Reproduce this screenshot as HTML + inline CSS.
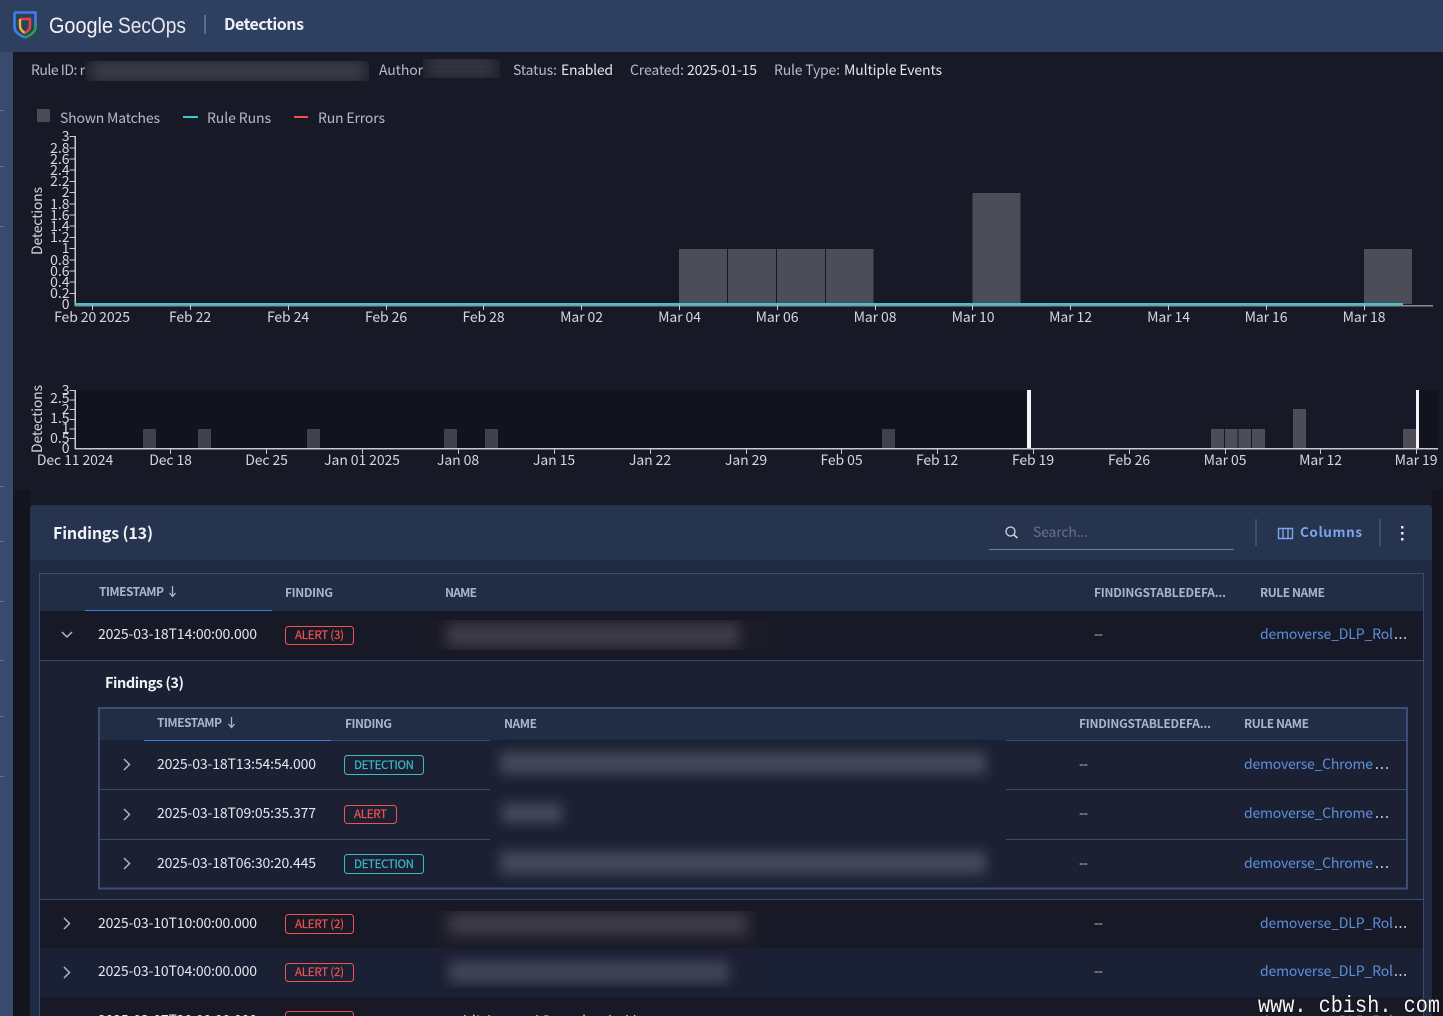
<!DOCTYPE html>
<html><head><meta charset="utf-8"><title>Detections</title>
<style>
html,body{margin:0;padding:0;background:#181926;overflow:hidden}
svg{display:block;font-family:"Noto Sans CJK JP","Liberation Sans",sans-serif}
.m{font-size:14px;fill:#b4bbcb}.w{font-size:14px;fill:#e4e6ec}
.t{font-size:14px;fill:#d6d7dc;letter-spacing:-.1px}.yl{font-size:14px;fill:#d6d7dc;text-anchor:end}
.h{font-size:12px;font-weight:700;fill:#a9b5cf}.c{font-size:14px;fill:#e6e8ee}
.d{font-size:14px;fill:#b9bcc6}.l{font-size:14px;fill:#5d8fdc}.e{font-size:14px;fill:#d9dbe2}
.r{font-size:11.5px;fill:#ef5350;stroke:#ef5350;stroke-width:.2}.b{font-size:11.5px;fill:#3db8c8;stroke:#3db8c8;stroke-width:.2}
.ch{fill:none;stroke:#a9b5cf;stroke-width:1.5}
</style></head><body>
<svg width="1443" height="1016" viewBox="0 0 1443 1016" xmlns="http://www.w3.org/2000/svg">
<defs>
<filter id="f" x="-10%" y="-100%" width="120%" height="300%"><feGaussianBlur stdDeviation="6"/></filter>
<filter id="g" x="-10%" y="-100%" width="120%" height="300%"><feGaussianBlur stdDeviation="6"/></filter>
<clipPath id="c1"><rect x="85" y="61" width="284" height="20"/></clipPath>
<clipPath id="c2"><rect x="423" y="59" width="77" height="19"/></clipPath>
<clipPath id="c3"><rect x="430" y="620" width="340" height="30"/></clipPath>
<clipPath id="c4"><rect x="435" y="911" width="323" height="77"/></clipPath>
</defs>
<rect width="1443" height="1016" fill="#181926"/>
<rect x="13" y="490" width="17" height="526" fill="#13141e"/>
<rect x="1432" y="490" width="11" height="526" fill="#13141e"/>
<!-- sidebar -->
<rect x="0" y="52" width="13" height="964" fill="#3a4a6c"/>
<g fill="#5f70a0"><rect y="110" width="4" height="1"/><rect y="166" width="4" height="1"/><rect y="226" width="4" height="1"/><rect y="486" width="4" height="1"/><rect y="541" width="4" height="1"/><rect y="601" width="4" height="1"/><rect y="660" width="4" height="1"/><rect y="716" width="4" height="1"/><rect y="776" width="4" height="1"/></g>
<!-- header -->
<rect width="1443" height="52" fill="#2f3f5f"/>
<path d="M14.5 12.5H35.5V27" fill="none" stroke="#3f7fe8" stroke-width="2.6"/>
<path d="M14.5 12.5V27C14.5 32 20 35.5 25 37.5" fill="none" stroke="#3f7fe8" stroke-width="2.6"/>
<path d="M35.5 24V27C35.5 32 30 35.5 25 37.5" fill="none" stroke="#27a04f" stroke-width="2.6"/>
<path d="M20 19H30V26C30 28 29 30 27.5 31" fill="none" stroke="#e5443a" stroke-width="2.4"/>
<path d="M20 19V26C20 29 22.5 31.5 25 33" fill="none" stroke="#f4b82e" stroke-width="2.4"/>
<path d="M30 26C30 29 27.5 31.5 25 33" fill="none" stroke="#e5443a" stroke-width="2.4"/>
<text x="49" y="33" font-size="22" fill="#f2f4f8" textLength="64" lengthAdjust="spacingAndGlyphs" style="font-family:'Liberation Sans',sans-serif">Google</text>
<text x="118" y="33" font-size="22" fill="#e3e6ee" textLength="68" lengthAdjust="spacingAndGlyphs" style="font-family:'Liberation Sans',sans-serif">SecOps</text>
<rect x="204" y="15" width="2" height="19" fill="#5a6b99"/>
<text x="224" y="30" font-size="16" font-weight="700" fill="#eef0f5" textLength="80">Detections</text>
<!-- meta -->
<text class="m" x="31" y="75" textLength="54">Rule ID: r</text>
<rect x="85" y="61" width="284" height="20" fill="#1f1f2b"/>
<g clip-path="url(#c1)"><g filter="url(#g)"><rect x="92" y="60" width="272" height="22" fill="#3b3b49"/></g></g>
<text class="m" x="379" y="75" textLength="44">Author</text>
<rect x="423" y="59" width="77" height="19" fill="#1f1f2b"/>
<g clip-path="url(#c2)"><g filter="url(#g)"><rect x="428" y="56" width="66" height="22" fill="#35353f"/></g></g>
<text class="m" x="513" y="75" textLength="44">Status:</text><text class="w" x="561" y="75" textLength="52">Enabled</text>
<text class="m" x="630" y="75" textLength="54">Created:</text><text class="w" x="687" y="75" textLength="70">2025-01-15</text>
<text class="m" x="774" y="75" textLength="66">Rule Type:</text><text class="w" x="844" y="75" textLength="98">Multiple Events</text>
<!-- legend -->
<rect x="37" y="109" width="13" height="13" fill="#4b4b57"/>
<text class="m" x="60" y="123" textLength="100">Shown Matches</text>
<rect x="183" y="116" width="15" height="2" fill="#3fc4d0"/><text class="m" x="207" y="123" textLength="64">Rule Runs</text>
<rect x="294" y="116" width="14" height="2" fill="#ef5350"/><text class="m" x="318" y="123" textLength="67">Run Errors</text>
<!-- chart 1 -->
<g fill="#4d4d59"><rect x="679" y="249" width="48" height="55"/><rect x="728" y="249" width="48" height="55"/><rect x="777" y="249" width="48" height="55"/><rect x="826" y="249" width="47.500" height="55"/><rect x="972.500" y="193" width="48" height="111"/><rect x="1364" y="249" width="48" height="55"/></g>
<rect x="74.500" y="136" width="1.500" height="170" fill="#c9c9cf"/>
<rect x="75" y="305" width="1358" height="1.500" fill="#8d8f98"/>
<rect x="75" y="303" width="1328" height="2" fill="#3fc4d0"/>
<g stroke="#c9c9cf" stroke-width="1"><path d="M69.500 136.500H75M69.500 148H75M69.500 159H75M69.500 170H75M69.500 181.500H75M69.500 192.500H75M69.500 204H75M69.500 215H75M69.500 226H75M69.500 237.500H75M69.500 248.500H75M69.500 260H75M69.500 271H75M69.500 282H75M69.500 293.500H75"/>
<path d="M92.500 305V310M190.500 305V310M288.500 305V310M386.500 305V310M483.500 305V310M581.500 305V310M679.500 305V310M777.500 305V310M875.500 305V310M972.500 305V310M1070.500 305V310M1168.500 305V310M1266.500 305V310M1364.500 305V310"/></g>
<g><text class="yl" x="69.500" y="141">3</text><text class="yl" x="69.500" y="153">2.8</text><text class="yl" x="69.500" y="164">2.6</text><text class="yl" x="69.500" y="175">2.4</text><text class="yl" x="69.500" y="186">2.2</text><text class="yl" x="69.500" y="197">2</text><text class="yl" x="69.500" y="209">1.8</text><text class="yl" x="69.500" y="220">1.6</text><text class="yl" x="69.500" y="231">1.4</text><text class="yl" x="69.500" y="242">1.2</text><text class="yl" x="69.500" y="253">1</text><text class="yl" x="69.500" y="265">0.8</text><text class="yl" x="69.500" y="276">0.6</text><text class="yl" x="69.500" y="287">0.4</text><text class="yl" x="69.500" y="298">0.2</text><text class="yl" x="69.500" y="309">0</text></g>
<text class="t" transform="translate(42,255) rotate(-90)" textLength="68">Detections</text>
<g text-anchor="middle"><text class="t" x="92" y="322">Feb 20 2025</text><text class="t" x="190" y="322">Feb 22</text><text class="t" x="288" y="322">Feb 24</text><text class="t" x="386" y="322">Feb 26</text><text class="t" x="483.500" y="322">Feb 28</text><text class="t" x="581.500" y="322">Mar 02</text><text class="t" x="679.500" y="322">Mar 04</text><text class="t" x="777" y="322">Mar 06</text><text class="t" x="875" y="322">Mar 08</text><text class="t" x="973" y="322">Mar 10</text><text class="t" x="1070.500" y="322">Mar 12</text><text class="t" x="1168.500" y="322">Mar 14</text><text class="t" x="1266" y="322">Mar 16</text><text class="t" x="1364" y="322">Mar 18</text></g>
<!-- chart 2 -->
<rect x="75" y="390" width="953" height="58" fill="#12131c"/><rect x="1418" y="390" width="20" height="58" fill="#12131c"/>
<g fill="#41414c"><rect x="143" y="429" width="13" height="19"/><rect x="198" y="429" width="13" height="19"/><rect x="307" y="429" width="13" height="19"/><rect x="444" y="429" width="13" height="19"/><rect x="485" y="429" width="13" height="19"/><rect x="882" y="429" width="13" height="19"/></g>
<g fill="#4d4d59"><rect x="1211" y="429" width="13" height="19"/><rect x="1225" y="429" width="12.500" height="19"/><rect x="1238.500" y="429" width="12.500" height="19"/><rect x="1252" y="429" width="13" height="19"/><rect x="1293" y="409" width="13" height="39"/><rect x="1403" y="429" width="13" height="19"/></g>
<rect x="74.500" y="390" width="1.500" height="59" fill="#c9c9cf"/>
<rect x="75" y="448" width="1363" height="1.500" fill="#c9c9cf"/>
<rect x="1027" y="390" width="4" height="58" fill="#f4f4f6"/><rect x="1416" y="390" width="3" height="58" fill="#f4f4f6"/>
<g stroke="#c9c9cf" stroke-width="1"><path d="M69.500 390.500H75M69.500 400H75M69.500 409.500H75M69.500 419.500H75M69.500 429H75M69.500 438.500H75"/>
<path d="M170.500 449V454M266.500 449V454M362.500 449V454M458.500 449V454M554.500 449V454M650.500 449V454M746.500 449V454M841.500 449V454M937.500 449V454M1033.500 449V454M1129.500 449V454M1225.500 449V454M1320.500 449V454M1416.500 449V454"/></g>
<text class="yl" x="69.500" y="395">3</text><text class="yl" x="69.500" y="403">2.5</text><text class="yl" x="69.500" y="414">2</text><text class="yl" x="69.500" y="423">1.5</text><text class="yl" x="69.500" y="433">1</text><text class="yl" x="69.500" y="443">0.5</text><text class="yl" x="69.500" y="453">0</text>
<text class="t" transform="translate(42,453) rotate(-90)" textLength="68">Detections</text>
<g text-anchor="middle"><text class="t" x="75" y="465">Dec 11 2024</text><text class="t" x="170.500" y="465">Dec 18</text><text class="t" x="266.500" y="465">Dec 25</text><text class="t" x="362" y="465">Jan 01 2025</text><text class="t" x="458" y="465">Jan 08</text><text class="t" x="554" y="465">Jan 15</text><text class="t" x="650" y="465">Jan 22</text><text class="t" x="746" y="465">Jan 29</text><text class="t" x="841.500" y="465">Feb 05</text><text class="t" x="937" y="465">Feb 12</text><text class="t" x="1033" y="465">Feb 19</text><text class="t" x="1129" y="465">Feb 26</text><text class="t" x="1225" y="465">Mar 05</text><text class="t" x="1320.500" y="465">Mar 12</text><text class="t" x="1416" y="465">Mar 19</text></g>
<!-- panel -->
<path d="M30 1016V509a4 4 0 0 1 4-4H1428a4 4 0 0 1 4 4V1016Z" fill="#1f2a43"/>
<path d="M30 560V509a4 4 0 0 1 4-4H1428a4 4 0 0 1 4 4V560Z" fill="#26344f"/>
<text x="53" y="539" font-size="16" font-weight="700" fill="#f0f2f6" textLength="100">Findings (13)</text>
<circle cx="1010.500" cy="531.500" r="4.500" fill="none" stroke="#d5d8e0" stroke-width="1.300"/><path d="M1014 535L1017.500 538" stroke="#d5d8e0" stroke-width="1.600"/>
<text x="1033" y="537" font-size="14" fill="#667089" textLength="55">Search...</text>
<rect x="989" y="549" width="245" height="1" fill="#6a7aa8"/>
<rect x="1255" y="519" width="2" height="27" fill="#3c4c74"/><rect x="1379" y="519" width="2" height="27" fill="#3c4c74"/>
<path d="M1278.500 528.500H1292.500V538.500H1278.500ZM1283 528.500V538.500M1288 528.500V538.500" fill="none" stroke="#7ba5ea" stroke-width="1.400"/>
<text x="1300" y="537" font-size="13.500" font-weight="700" fill="#7ba5ea" textLength="62">Columns</text>
<g fill="#e8eaf0"><rect x="1401" y="526" width="2.500" height="2.500"/><rect x="1401" y="532" width="2.500" height="2.500"/><rect x="1401" y="538" width="2.500" height="2.500"/></g>
<!-- outer table -->
<rect x="39.500" y="573.500" width="1384" height="450" fill="#181926" stroke="#3a4a70"/>
<rect x="40" y="574" width="1383" height="37" fill="#212c45"/>
<rect x="85" y="610" width="187" height="1" fill="#3a7fe0"/>
<text class="h" x="99" y="596" textLength="65">TIMESTAMP</text>
<path d="M172.500 586V596M169.500 593L172.500 596.500L175.500 593" fill="none" stroke="#a9b5cf" stroke-width="1.300"/>
<text class="h" x="285" y="597" textLength="48">FINDING</text><text class="h" x="445" y="597" textLength="32">NAME</text>
<text class="h" x="1094" y="597" textLength="132">FINDINGSTABLEDEFA...</text><text class="h" x="1260" y="597" textLength="65">RULE NAME</text>
<!-- row 1 -->
<path class="ch" d="M62 632L67 637L72 632"/>
<text class="c" x="98" y="639" textLength="159">2025-03-18T14:00:00.000</text>
<rect x="285.500" y="626.500" width="68" height="18" rx="3" fill="none" stroke="#ef5350"/>
<text class="r" x="295" y="639" textLength="49">ALERT (3)</text>
<rect x="430" y="620" width="340" height="30" fill="#1b1b27"/>
<g clip-path="url(#c3)"><g filter="url(#f)"><rect x="447" y="623" width="292" height="24" fill="#3c3a46"/></g></g>
<text class="d" x="1094" y="639" textLength="9">--</text>
<text class="l" x="1260" y="639" textLength="133">demoverse_DLP_Rol</text><text class="e" x="1394" y="639" textLength="13">...</text>
<!-- expanded -->
<rect x="40" y="660" width="1383" height="240" fill="#1b2133"/>
<rect x="40" y="660" width="1383" height="1" fill="#3a4a70"/><rect x="40" y="899" width="1383" height="1" fill="#3a4a70"/>
<text x="105" y="688" font-size="14.500" font-weight="700" fill="#f0f2f6" textLength="79">Findings (3)</text>
<rect x="99" y="708" width="1308" height="180.500" fill="#1b2133" stroke="#3d4d76" stroke-width="2"/>
<rect x="100" y="709" width="1306" height="31" fill="#212c45"/>
<rect x="144" y="740" width="187" height="1" fill="#3a7fe0"/>
<rect x="331" y="740" width="159" height="1" fill="#3a4a70"/><rect x="1006" y="740" width="400" height="1" fill="#3a4a70"/>
<text class="h" x="157" y="727" textLength="65">TIMESTAMP</text>
<path d="M231.500 717V727M228.500 724L231.500 727.500L234.500 724" fill="none" stroke="#a9b5cf" stroke-width="1.300"/>
<text class="h" x="345" y="728" textLength="47">FINDING</text><text class="h" x="504" y="728" textLength="33">NAME</text>
<text class="h" x="1079" y="728" textLength="132">FINDINGSTABLEDEFA...</text><text class="h" x="1244" y="728" textLength="65">RULE NAME</text>
<g fill="#3a4a70"><rect x="100" y="789" width="390" height="1"/><rect x="1006" y="789" width="400" height="1"/><rect x="100" y="839" width="390" height="1"/><rect x="1006" y="839" width="400" height="1"/></g>
<g filter="url(#g)" fill="#444a5a"><rect x="500" y="752" width="486" height="22"/><rect x="502" y="803" width="60" height="20"/><rect x="500" y="851" width="486" height="23"/></g>
<path class="ch" d="M124 759L129.500 764.500L124 770"/><path class="ch" d="M124 809L129.500 814.500L124 820"/><path class="ch" d="M124 858L129.500 863.500L124 869"/>
<text class="c" x="157" y="769" textLength="159">2025-03-18T13:54:54.000</text>
<text class="c" x="157" y="818" textLength="159">2025-03-18T09:05:35.377</text>
<text class="c" x="157" y="868" textLength="159">2025-03-18T06:30:20.445</text>
<rect x="344.500" y="755.500" width="79" height="19" rx="3" fill="none" stroke="#3db8c8"/><text class="b" x="354" y="769" textLength="60">DETECTION</text>
<rect x="344.500" y="805.500" width="52" height="18" rx="3" fill="none" stroke="#ef5350"/><text class="r" x="354" y="818" textLength="33">ALERT</text>
<rect x="344.500" y="854.500" width="79" height="19" rx="3" fill="none" stroke="#3db8c8"/><text class="b" x="354" y="868" textLength="60">DETECTION</text>
<text class="d" x="1079" y="769" textLength="9">--</text><text class="d" x="1079" y="818" textLength="9">--</text><text class="d" x="1079" y="868" textLength="9">--</text>
<text class="l" x="1244" y="769" textLength="129">demoverse_Chrome</text><text class="e" x="1375" y="769" textLength="14">...</text>
<text class="l" x="1244" y="818" textLength="129">demoverse_Chrome</text><text class="e" x="1375" y="818" textLength="14">...</text>
<text class="l" x="1244" y="868" textLength="129">demoverse_Chrome</text><text class="e" x="1375" y="868" textLength="14">...</text>
<!-- rows -->
<rect x="40" y="900" width="1383" height="48" fill="#181926"/>
<rect x="40" y="948" width="1383" height="49" fill="#1a2135"/>
<rect x="40" y="997" width="1383" height="19" fill="#181926"/>
<rect x="435" y="911" width="323" height="37" fill="#1c1c29"/><rect x="435" y="948" width="323" height="40" fill="#1c2032"/>
<g clip-path="url(#c4)"><g filter="url(#f)"><rect x="449" y="913" width="298" height="22" fill="#3c3a46"/><rect x="449" y="961" width="280" height="22" fill="#3f4558"/></g></g>
<path class="ch" d="M64 918L69.500 923.500L64 929"/><path class="ch" d="M64 967L69.500 972.500L64 978"/>
<text class="c" x="98" y="928" textLength="159">2025-03-10T10:00:00.000</text>
<text class="c" x="98" y="976" textLength="159">2025-03-10T04:00:00.000</text>
<text class="c" x="98" y="1025" textLength="159">2025-03-07T20:00:00.000</text>
<rect x="285.500" y="914.500" width="68" height="19" rx="3" fill="none" stroke="#ef5350"/><text class="r" x="295" y="928" textLength="49">ALERT (2)</text>
<rect x="285.500" y="963.500" width="68" height="18" rx="3" fill="none" stroke="#ef5350"/><text class="r" x="295" y="976" textLength="49">ALERT (2)</text>
<rect x="285.500" y="1011.500" width="68" height="19" rx="3" fill="none" stroke="#ef5350"/>
<text class="c" x="445" y="1026" textLength="250">publisher and Downloaded by: event</text>
<text class="d" x="1094" y="928" textLength="9">--</text><text class="d" x="1094" y="976" textLength="9">--</text>
<text class="l" x="1260" y="928" textLength="133">demoverse_DLP_Rol</text><text class="e" x="1394" y="928" textLength="13">...</text>
<text class="l" x="1260" y="976" textLength="133">demoverse_DLP_Rol</text><text class="e" x="1394" y="976" textLength="13">...</text>
<text class="l" x="1260" y="1026" textLength="133">demoverse_DLP_Rol</text>
<!-- watermark -->
<text x="1258" y="1012" font-size="23" textLength="182" lengthAdjust="spacingAndGlyphs" fill="#f4f4f4" stroke="#111" stroke-width="1.200" style="paint-order:stroke;font-family:'Liberation Mono',monospace">www. cbish. com</text>
</svg>
</body></html>
